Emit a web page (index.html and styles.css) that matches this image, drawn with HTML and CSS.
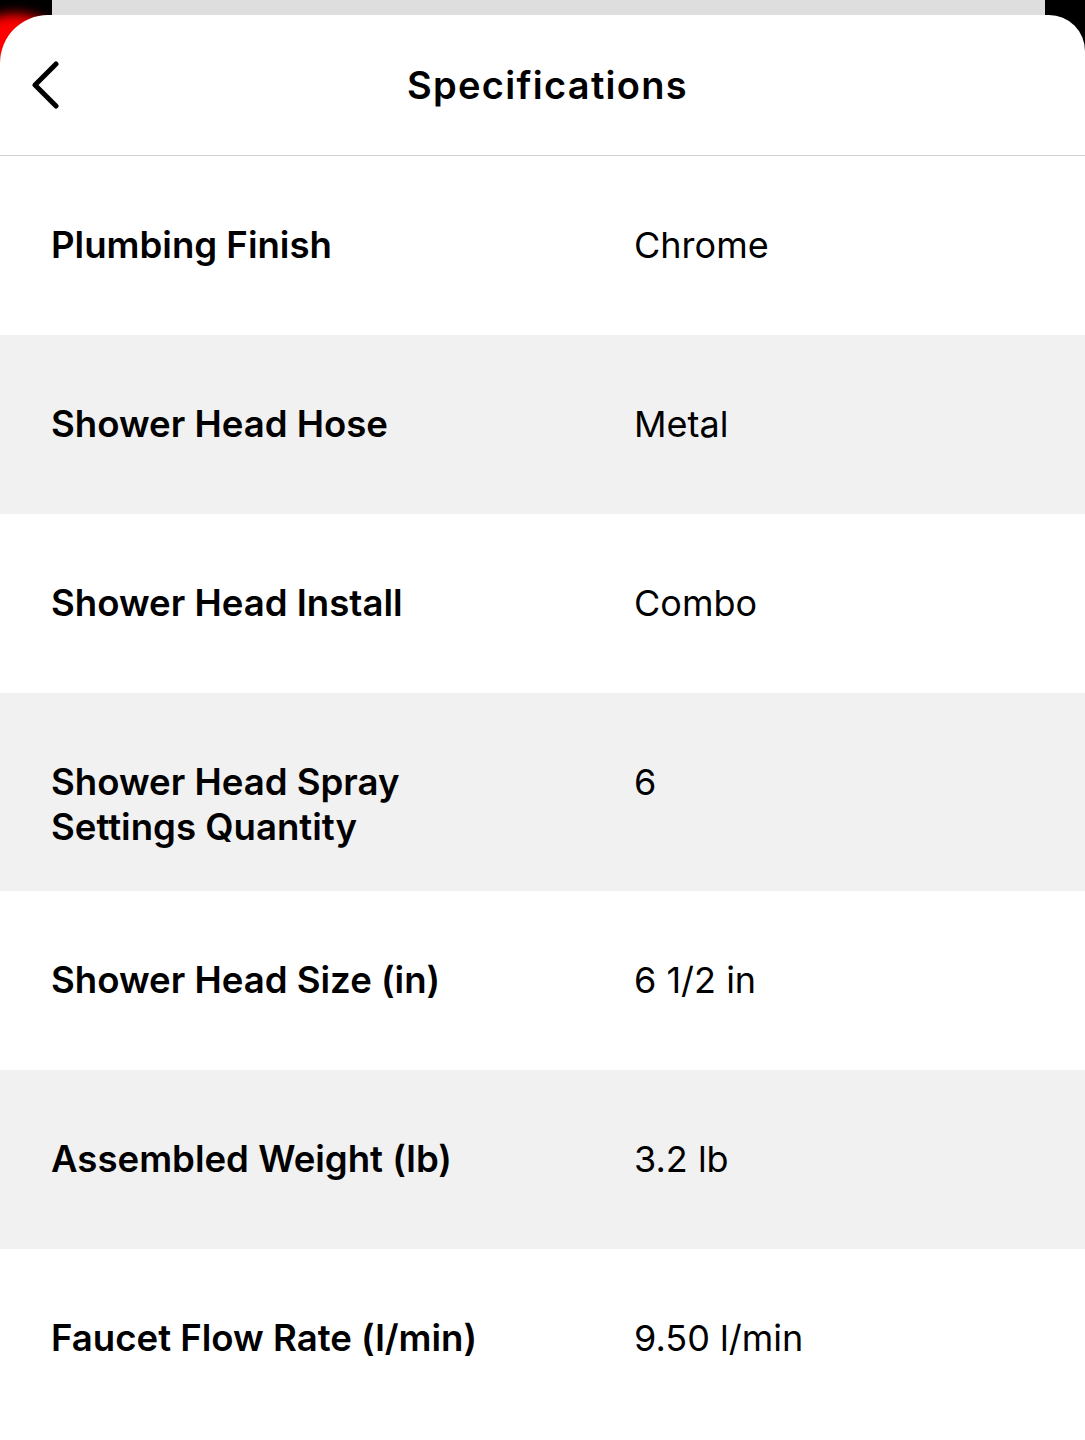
FILE: index.html
```html
<!DOCTYPE html>
<html lang="en">
<head>
<meta charset="utf-8">
<title>Specifications</title>
<link rel="stylesheet" href="styles.css">
</head>
<body>
<div class="screen">
  <div class="backdrop">
    <div class="red-glow"></div>
    <div class="under-sheet"></div>
  </div>
  <div class="sheet">
    <header class="header">
      <button class="back" aria-label="Back">
        <svg width="30" height="48" viewBox="0 0 30 48"><path d="M25 3 L4 24 L25 45" fill="none" stroke="#000" stroke-width="5" stroke-linecap="round" stroke-linejoin="round"/></svg>
      </button>
      <h1 class="title">Specifications</h1>
    </header>
    <div class="specs">
      <div class="row"><div class="label">Plumbing Finish</div><div class="value">Chrome</div></div>
      <div class="row alt"><div class="label">Shower Head Hose</div><div class="value">Metal</div></div>
      <div class="row"><div class="label">Shower Head Install</div><div class="value">Combo</div></div>
      <div class="row alt"><div class="label">Shower Head Spray Settings Quantity</div><div class="value">6</div></div>
      <div class="row"><div class="label">Shower Head Size (in)</div><div class="value">6 1/2 in</div></div>
      <div class="row alt"><div class="label">Assembled Weight (lb)</div><div class="value">3.2 lb</div></div>
      <div class="row"><div class="label">Faucet Flow Rate (l/min)</div><div class="value">9.50 l/min</div></div>
    </div>
  </div>
</div>
</body>
</html>
```
FILE: styles.css
```css
* { box-sizing: border-box; }
html, body { margin: 0; padding: 0; }
body {
  background: #fff;
  font-family: Inter, "Noto Sans", "Liberation Sans", sans-serif;
  color: #000;
}
.screen {
  position: relative;
  width: 1085px;
  height: 1440px;
  overflow: hidden;
  background: #fff;
}
.backdrop {
  position: absolute;
  left: 0; top: 0;
  width: 100%;
  height: 90px;
  background: #000;
  overflow: hidden;
}
.red-glow {
  position: absolute;
  left: -50px; top: 14px;
  width: 130px; height: 130px;
  border-radius: 50%;
  background: #ff0000;
  filter: blur(6px);
}
.under-sheet {
  position: absolute;
  left: 52px; right: 40px; top: 0;
  height: 40px;
  background: #dedede;
}
.sheet {
  position: relative;
  margin-top: 15px;
  background: #fff;
  border-radius: 48px 36px 0 0;
  min-height: 1425px;
}
.header {
  position: relative;
  height: 141px;
  border-bottom: 1px solid #cfcfcf;
  display: flex;
  align-items: center;
  justify-content: center;
}
.back {
  position: absolute;
  left: 31px; top: 46px;
  border: 0; padding: 0; background: none;
  width: 30px; height: 48px;
}
.back svg { display: block; }
.title {
  margin: 0;
  font-size: 38px;
  font-weight: 600;
  letter-spacing: 1.3px;
  padding-left: 10px;
  padding-bottom: 0;
}
.row {
  display: grid;
  grid-template-columns: 583px 1fr;
  min-height: 179px;
  padding: 67px 20px 41px 51px;
  line-height: 45px;
}
.row.alt { background: #f1f1f1; }
.label { font-size: 36.6px; font-weight: 600; padding-right: 110px; }
.value { font-size: 36px; font-weight: 400; }
```
